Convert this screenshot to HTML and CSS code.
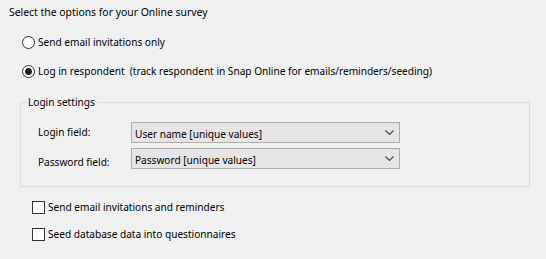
FILE: index.html
```html
<!DOCTYPE html>
<html>
<head>
<meta charset="utf-8">
<link rel="stylesheet" href="styles.css">
</head>
<body>
<div class="page">
  <div class="title">Select the options for your Online survey</div>
  <div class="radios">
    <label class="opt"><span class="radio"></span><span>Send email invitations only</span></label>
    <label class="opt"><span class="radio on"></span><span>Log in respondent&nbsp; (track respondent in Snap Online for emails/reminders/seeding)</span></label>
  </div>
  <fieldset class="group">
    <legend>Login settings</legend>
    <div class="field">
      <span class="flabel first">Login field:</span>
      <div class="combo"><span>User name [unique values]</span><svg class="chev" width="9" height="5" viewBox="0 0 9 5"><path d="M0.5 0.5 L4.5 4.5 L8.5 0.5" fill="none" stroke="#444" stroke-width="1.1"/></svg></div>
    </div>
    <div class="field">
      <span class="flabel second">Password field:</span>
      <div class="combo"><span>Password [unique values]</span><svg class="chev" width="9" height="5" viewBox="0 0 9 5"><path d="M0.5 0.5 L4.5 4.5 L8.5 0.5" fill="none" stroke="#444" stroke-width="1.1"/></svg></div>
    </div>
  </fieldset>
  <div class="checks">
    <label class="opt"><span class="check"></span><span>Send email invitations and reminders</span></label>
    <label class="opt"><span class="check"></span><span>Seed database data into questionnaires</span></label>
  </div>
</div>
</body>
</html>
```

FILE: styles.css
```css
html, body {
  margin: 0;
  padding: 0;
  background: #f0f0f0;
}
body {
  font-family: "Noto Sans", "Open Sans", sans-serif;
  font-size: 10.1px;
  color: #000;
  width: 546px;
  height: 259px;
  overflow: hidden;
}
.page {
  padding: 4px 0 0 9px;
}
.title {
  line-height: 16px;
  font-size: 10.4px;
}
.radios {
  display: flex;
  flex-direction: column;
  gap: 13px;
  margin: 14px 0 0 13px;
}
.opt {
  display: flex;
  align-items: center;
  gap: 3px;
  height: 16px;
  line-height: 16px;
}
.radio {
  width: 11px;
  height: 11px;
  border: 1px solid #333;
  border-radius: 50%;
  background: #fff;
  position: relative;
  flex: none;
}
.radio.on::after {
  content: "";
  position: absolute;
  left: 2px;
  top: 2px;
  width: 7px;
  height: 7px;
  border-radius: 50%;
  background: #222;
}
.group {
  margin: 15px 0 0 11px;
  width: 510px;
  box-sizing: border-box;
  border: 1px solid #dcdcdc;
  padding: 12px 0 17px 17px;
}
.group legend {
  padding: 0 2px;
  margin-left: -12px;
  line-height: 16px;
}
.field {
  display: flex;
  align-items: flex-start;
  height: 21px;
}
.field + .field {
  margin-top: 5px;
}
.flabel {
  width: 93px;
  line-height: 16px;
}
.flabel.first {
  margin-top: 2px;
}
.flabel.second {
  margin-top: 6px;
}
.combo {
  width: 269px;
  height: 21px;
  box-sizing: border-box;
  border: 1px solid #adadad;
  background: #e5e5e5;
  display: flex;
  align-items: center;
  justify-content: space-between;
  padding: 2px 5px 0 3px;
}
.chev {
  display: block;
  margin-top: -2px;
}
.checks {
  display: flex;
  flex-direction: column;
  gap: 11px;
  margin: 12px 0 0 23px;
}
.check {
  width: 11px;
  height: 11px;
  border: 1px solid #333;
  background: #fff;
  flex: none;
}
```
